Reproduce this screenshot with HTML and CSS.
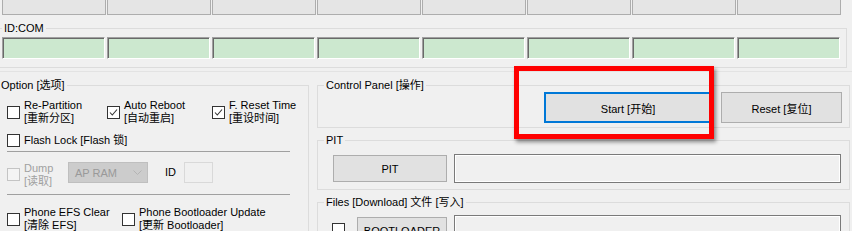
FILE: index.html
```html
<!DOCTYPE html>
<html lang="zh">

<head>
    <meta charset="UTF-8">
    <title>Odin</title>
    <link rel="stylesheet" href="styles.css">
</head>

<body>
    <div class="top-strip">
        <div class="slot"></div>
        <div class="slot"></div>
        <div class="slot"></div>
        <div class="slot"></div>
        <div class="slot"></div>
        <div class="slot"></div>
        <div class="slot"></div>
        <div class="slot"></div>
    </div>

    <fieldset class="group com-group">
        <legend>ID:COM</legend>
        <div class="com-row">
            <div class="com"></div>
            <div class="com"></div>
            <div class="com"></div>
            <div class="com"></div>
            <div class="com"></div>
            <div class="com"></div>
            <div class="com"></div>
            <div class="com"></div>
        </div>
    </fieldset>

    <div class="main">
        <fieldset class="group options">
            <legend>Option [选项]</legend>

            <div class="opt-row row-top">
                <label class="opt"><span class="cb"></span><span class="lbl">Re-Partition<br>[重新分区]</span></label>
                <label class="opt"><span class="cb"><svg viewBox="0 0 11 11"><polyline points="2,5.5 4.3,8 9,2.5" /></svg></span><span class="lbl">Auto Reboot<br>[自动重启]</span></label>
                <label class="opt"><span class="cb"><svg viewBox="0 0 11 11"><polyline points="2,5.5 4.3,8 9,2.5" /></svg></span><span class="lbl">F. Reset Time<br>[重设时间]</span></label>
            </div>

            <div class="opt-row row-lock">
                <label class="opt"><span class="cb"></span><span class="lbl">Flash Lock [Flash 锁]</span></label>
            </div>

            <div class="sep"></div>

            <div class="dump-row">
                <label class="opt dump"><span class="cb off"></span><span class="lbl">Dump<br>[读取]</span></label>
                <div class="combo">
                    <span>AP RAM</span>
                    <svg class="chev" viewBox="0 0 9 5"><polyline points="0.5,0.5 4.5,4.5 8.5,0.5" /></svg>
                </div>
                <span class="id-lbl">ID</span>
                <div class="id-box"></div>
            </div>

            <div class="sep"></div>

            <div class="opt-row row-phone">
                <label class="opt"><span class="cb"></span><span class="lbl">Phone EFS Clear<br>[清除 EFS]</span></label>
                <label class="opt"><span class="cb"></span><span class="lbl">Phone Bootloader Update<br>[更新 Bootloader]</span></label>
            </div>
        </fieldset>

        <div class="right">
            <fieldset class="group control">
                <legend>Control Panel [操作]</legend>
                <div class="btn-row">
                    <button class="btn start">Start [开始]</button>
                    <button class="btn reset">Reset [复位]</button>
                </div>
            </fieldset>

            <fieldset class="group pit">
                <legend>PIT</legend>
                <div class="file-row">
                    <button class="btn pit-btn">PIT</button>
                    <div class="field"></div>
                </div>
            </fieldset>

            <fieldset class="group files">
                <legend>Files [Download] 文件 [写入]</legend>
                <div class="file-row top">
                    <span class="cb file-cb"></span>
                    <button class="btn boot-btn">BOOTLOADER</button>
                    <div class="field"></div>
                </div>
            </fieldset>
        </div>
    </div>

    <!-- annotation drawn over the start button -->
    <div class="callout"></div>
</body>

</html>
```

FILE: styles.css
```css
body {
    margin: 0;
    height: 231px;
    overflow: hidden;
    position: relative;
    background-color: #f0f0f0;
    color: #000;
    font-family: "Liberation Sans", "Noto Sans CJK SC", sans-serif;
    font-size: 11px;
}

/* top strip of port slots */
.top-strip {
    display: flex;
    gap: 1px;
    padding-left: 2px;
}

.slot {
    width: 104px;
    height: 15px;
    box-sizing: border-box;
    border: 1px solid #adadad;
    border-top: none;
    background-color: #e5e5e5;
}

/* group boxes */
.group {
    margin: 0;
    padding: 0;
    min-width: 0;
    border: 1px solid #dcdcdc;
}

.group legend {
    margin-left: 6px;
    padding: 0 2px;
    line-height: 15px;
}

.com-group {
    margin: 6px 5px 0 -1px;
    padding: 1px 0 8px 0;
}

.com-group legend {
    margin-left: 2px;
}

.com-row {
    display: flex;
    gap: 2px;
    padding-left: 2px;
}

.com {
    width: 103px;
    height: 22px;
    box-sizing: border-box;
    background-color: #cce8cf;
    border: 1px solid;
    border-color: #a0a0a0 #fff #fff #a0a0a0;
    box-shadow: inset 1px 1px 0 #696969;
}

.main {
    margin-top: 3px;
    border-top: 1px solid #e3e3e3;
    display: flex;
    gap: 8px;
    align-items: flex-start;
}

/* options column */
.options {
    width: 310px;
    box-sizing: border-box;
    margin: 6px 0 0 -1px;
    height: 200px;
}

.options legend {
    margin-left: 0;
    padding: 0 2px 0 1px;
}

.opt-row {
    display: grid;
    padding-left: 7px;
}

.row-top {
    grid-template-columns: 100px 105px auto;
    margin-top: 6px;
}

.row-lock {
    margin-top: 9px;
}

.row-phone {
    grid-template-columns: 115px auto;
    margin-top: 11px;
}

.opt {
    display: flex;
    align-items: center;
    gap: 4px;
}

.lbl {
    line-height: 13px;
    white-space: nowrap;
}

.cb {
    width: 13px;
    height: 13px;
    box-sizing: border-box;
    border: 1px solid #333;
    background-color: #fff;
    flex-shrink: 0;
}

.cb svg {
    display: block;
    width: 11px;
    height: 11px;
    fill: none;
    stroke: #333;
    stroke-width: 1.1;
}

.cb.off {
    border-color: #c4c4c4;
    background-color: #f4f4f4;
}

.sep {
    width: 283px;
    height: 1px;
    margin: 4px 0 0 7px;
    background-color: #a0a0a0;
}

.dump-row + .sep {
    margin-top: 6px;
}

.dump-row {
    display: flex;
    align-items: flex-start;
    padding-left: 7px;
    margin-top: 10px;
}

.opt.dump {
    width: 61px;
    align-items: flex-start;
    color: #a0a0a0;
}

.opt.dump .cb {
    margin-top: 6px;
}

.combo {
    width: 80px;
    height: 21px;
    box-sizing: border-box;
    display: flex;
    align-items: center;
    justify-content: space-between;
    padding: 0 5px 0 6px;
    background-color: #cccccc;
    border: 1px solid #bfbfbf;
    color: #999;
}

.chev {
    width: 9px;
    height: 5px;
    fill: none;
    stroke: #b4b4b4;
    stroke-width: 1;
}

.id-lbl {
    width: 19px;
    margin: 4px 0 0 17px;
    line-height: 13px;
}

.id-box {
    width: 29px;
    height: 21px;
    box-sizing: border-box;
    border: 1px solid #d9d9d9;
}

/* right column */
.right {
    flex: 1;
    margin: 6px 2px 0 0;
}

.control {
    padding-bottom: 4px;
}

.btn-row {
    display: flex;
    justify-content: flex-end;
    gap: 9px;
    margin: -1px 7px 0 0;
}

.btn {
    box-sizing: border-box;
    padding: 0;
    display: flex;
    align-items: center;
    justify-content: center;
    background-color: #e1e1e1;
    border: 1px solid #adadad;
    color: #000;
    font: inherit;
    white-space: nowrap;
}

.btn.start {
    width: 168px;
    height: 31px;
    border: 2px solid #0078d7;
}

.btn.reset {
    width: 121px;
    height: 31px;
}

.pit {
    margin-top: 5px;
    padding: 6px 0;
}

.pit .file-row {
    padding-left: 15px;
}

.files {
    margin-top: 5px;
    padding-top: 5px;
    height: 40px;
}

.files .file-row {
    padding-left: 14px;
}

.file-row {
    display: flex;
    align-items: center;
    gap: 7px;
}

.file-row.top {
    align-items: flex-start;
}

.pit-btn {
    width: 114px;
    height: 27px;
}

.file-cb {
    margin: 8px 5px 0 0;
}

.boot-btn {
    width: 90px;
    height: 27px;
    margin-top: 2px;
}

.field {
    width: 387px;
    height: 29px;
    box-sizing: border-box;
    border: 1px solid #7a7a7a;
    box-shadow: inset 0 0 0 1px #fff;
}

/* red highlight box */
.callout {
    position: absolute;
    left: 514px;
    top: 66px;
    width: 200px;
    height: 73px;
    box-sizing: border-box;
    border: 5px solid #ff0000;
    box-shadow: 2px 3px 4px rgba(0, 0, 0, 0.45);
}
```
